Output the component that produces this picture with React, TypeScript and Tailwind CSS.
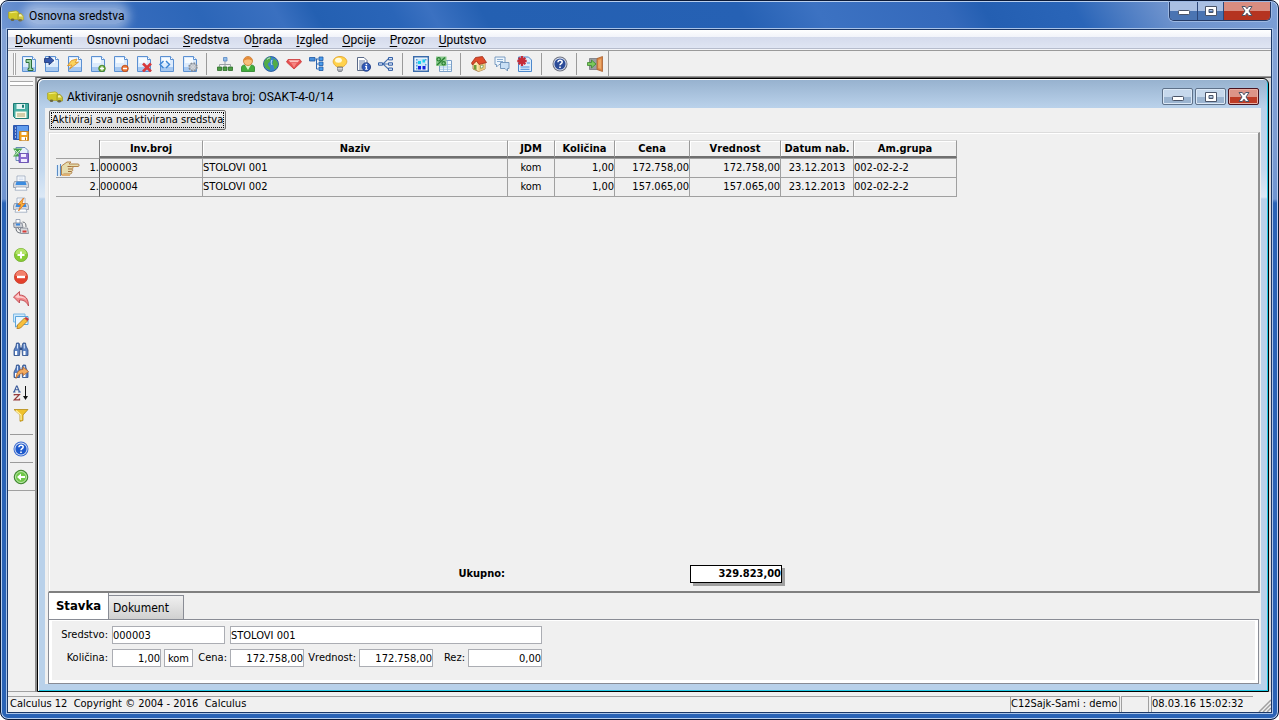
import { useState } from 'react';
import type { ReactNode } from 'react';

interface Tool {
  label: string;
  icon: ReactNode;
}

interface Asset {
  inv: string;
  name: string;
  unit: string;
  qty: string;
  price: string;
  value: string;
  date: string;
  group: string;
}

const ASSETS: Asset[] = [
  { inv: '000003', name: 'STOLOVI 001', unit: 'kom', qty: '1,00', price: '172.758,00', value: '172.758,00', date: '23.12.2013', group: '002-02-2-2' },
  { inv: '000004', name: 'STOLOVI 002', unit: 'kom', qty: '1,00', price: '157.065,00', value: '157.065,00', date: '23.12.2013', group: '002-02-2-2' },
];

// [before, underlined letter, after]
const MENU: [string, string, string][] = [
  ['', 'D', 'okumenti'],
  ['Osnovni podaci', '', ''],
  ['', 'S', 'redstva'],
  ['O', 'b', 'rada'],
  ['', 'I', 'zgled'],
  ['', 'O', 'pcije'],
  ['', 'P', 'rozor'],
  ['', 'U', 'putstvo'],
];

function Svg({ children }: { children: ReactNode }) {
  return (
    <svg viewBox="0 0 16 16" className="block h-4 w-4 shrink-0" fill="none" aria-hidden="true">
      {children}
    </svg>
  );
}

function Truck() {
  return (
    <svg viewBox="0 0 16 16" className="block h-4 w-4 shrink-0" aria-hidden="true">
      <path d="M0.500 4 8 2.800l2.500 1.200v7.500H2.500l-2-1.500z" fill="#d0c828" stroke="#a39d24" strokeWidth=".6" />
      <path d="M1 4.200 8 3.400l1.800.9-7 .9z" fill="#f2ee80" />
      <path d="M10 5.800 13 5.300l2.600 3v3.700H10z" fill="#c9c22a" stroke="#8c8722" strokeWidth=".6" />
      <path d="M11 6.600 12.800 6.300l1.700 2.200H11z" fill="#f4f2b0" />
      <ellipse cx="4.500" cy="11.800" rx="1.800" ry="1.300" fill="#6b6640" />
      <ellipse cx="12.300" cy="12.300" rx="1.800" ry="1.300" fill="#6b6640" />
    </svg>
  );
}

function Page({ children }: { children?: ReactNode }) {
  return (
    <Svg>
      <path d="M1.500.5h10l3 3v12h-13z" fill="#dcebfc" stroke="#5b90d2" />
      <path d="M3 2h8v5H3z" fill="#f6fbff" />
      <path d="M11.500.5v3h3" fill="#fff" stroke="#5b90d2" />
      <path d="M2 11h12v4H2z" fill="#a6c8f0" />
      {children}
    </Svg>
  );
}

function Binoculars({ children }: { children?: ReactNode }) {
  return (
    <Svg>
      <path d="M3.500 2h2.500l1 3v3l-.5 6.500H1V9l2-4zM10 2h2.500l.5 3 2 4v5.500H9.500L9 8V5z" fill="#5a80c0" stroke="#2c4c88" strokeWidth=".8" />
      <path d="M2 10h2.200v4H2zM10.300 10h2.200v4h-2.200z" fill="#fff" />
      <path d="M4 3h1v4.500H4zM10.800 3h1v4.500h-1z" fill="#d5e4fb" />
      <path d="M6.800 6.500h2.400v2.500H6.800z" fill="#2c4c88" />
      {children}
    </Svg>
  );
}

function Printer() {
  return (
    <>
      <path d="M4 6.500V1h8v5.500" fill="#fff" stroke="#98a6bc" strokeWidth=".8" />
      <path d="M5.500 3h5M5.500 4.700h5" stroke="#b7c9e4" strokeWidth=".7" />
      <path d="M1.500 6.500h13l1 2.500v3.500H.5V9z" fill="#d5d8df" stroke="#8c929e" strokeWidth=".8" />
      <path d="M3.500 6.500h9L13.500 10h-11z" fill="#3c8ce0" />
      <path d="M3 12h10l1 3.200H2z" fill="#fff" stroke="#98a6bc" strokeWidth=".8" />
    </>
  );
}

function Question({ fill, ring }: { fill: string; ring: string }) {
  return (
    <Svg>
      <circle cx="8" cy="8" r="7.500" fill={ring} />
      <circle cx="8" cy="8" r="6.500" fill="#dfe6f4" />
      <circle cx="8" cy="8" r="5.600" fill={fill} />
      <path d="M5.900 6.300c0-2.900 4.300-2.700 4.300-.2C10.200 7.700 8 7.600 8 9.300" stroke="#fff" strokeWidth="1.500" />
      <path d="M7.200 10.400h1.600V12H7.200z" fill="#fff" />
    </Svg>
  );
}

const DOC_TOOLS: Tool[] = [
  {
    label: 'Prvi dokument',
    icon: (
      <Page>
        <path d="M5 3.500h5.500v9h1.500v2H7v-2h1V6.500H5z" fill="#9fd6a8" stroke="#2c6e3c" />
      </Page>
    ),
  },
  {
    label: 'Otvori dokument',
    icon: (
      <Page>
        <path d="M.5 2.500H5V.2l5 4.300-5 4.300V6.500H.5z" fill="#3357ac" stroke="#1c3274" strokeWidth=".8" />
      </Page>
    ),
  },
  {
    label: 'Brzi unos',
    icon: (
      <Page>
        <path d="M4.500 4.500 10 3 8.300 6.500l3.200-.4-9 7L5 9 .5 9.700z" fill="#fbd45c" stroke="#dc9428" strokeWidth=".9" />
      </Page>
    ),
  },
  {
    label: 'Novi dokument',
    icon: (
      <Page>
        <circle cx="12" cy="12.500" r="3.300" fill="#6fae44" stroke="#3c7a20" strokeWidth=".8" />
        <path d="M12 10.500v4M10 12.500h4" stroke="#fff" strokeWidth="1.300" />
      </Page>
    ),
  },
  {
    label: 'Zatvori dokument',
    icon: (
      <Page>
        <circle cx="12" cy="12.500" r="3.300" fill="#ec7434" stroke="#b84814" strokeWidth=".8" />
        <path d="M10 12.500h4" stroke="#fff" strokeWidth="1.500" />
      </Page>
    ),
  },
  {
    label: 'Obriši dokument',
    icon: (
      <Page>
        <path d="m7 7.500 8 8M15 7.500l-8 8" stroke="#d83a3c" strokeWidth="2.600" />
      </Page>
    ),
  },
  {
    label: 'Razmena',
    icon: (
      <Page>
        <path d="M4.500 5 1 8.500 4.500 12M7 5l3.500 3.500L7 12" fill="#d5eaff" stroke="#3a83d4" strokeWidth="1.400" />
      </Page>
    ),
  },
  {
    label: 'Podešavanje dokumenta',
    icon: (
      <Page>
        <circle cx="11" cy="11" r="3.800" fill="#c8ccd2" stroke="#858b94" strokeWidth="1.800" strokeDasharray="1.700 1.300" />
        <circle cx="11" cy="11" r="3.200" fill="#d4d8de" stroke="#858b94" strokeWidth=".6" />
        <circle cx="11" cy="11" r="1.200" fill="#fff" stroke="#858b94" strokeWidth=".5" />
      </Page>
    ),
  },
];

const DATA_TOOLS: Tool[] = [
  {
    label: 'Organizacija',
    icon: (
      <Svg>
        <path d="M8 5v6M2.500 10.500V8.500h11v2" stroke="#9aa0a6" />
        <path d="M6.500 1.500h3.500v3.500H6.500z" fill="#92bce8" stroke="#5888c4" strokeWidth=".8" />
        <path d="M.5 11h4v3.500h-4zM6 11h4v3.500H6zM11.500 11h4v3.500h-4z" fill="#4c9c44" stroke="#2c6c28" strokeWidth=".8" />
      </Svg>
    ),
  },
  {
    label: 'Partneri',
    icon: (
      <Svg>
        <path d="M1.500 15.500V12c0-3 2.500-3 4-3h5c1.500 0 4 0 4 3v3.500z" fill="#42ae3c" stroke="#28822a" strokeWidth=".8" />
        <path d="m5 9 3 5 3-5z" fill="#dcf6cc" />
        <circle cx="8" cy="5" r="4.500" fill="#f8bf7c" stroke="#c4762c" strokeWidth=".8" />
        <path d="M3.600 5C3 -.5 13-.5 12.400 5 10.500 3 6 3 3.600 5z" fill="#e48a38" />
      </Svg>
    ),
  },
  {
    label: 'Lokacije',
    icon: (
      <Svg>
        <circle cx="8" cy="8" r="7.500" fill="#3a84cc" stroke="#1a4e90" strokeWidth=".8" />
        <path d="M1 6.500C2 3 4 1 8 1c1 2-1 2-1 4S4 7 5 9s3 2 2 5C3 13 1 11 1 6.500zM10 2.500c3 1 5 3 5 6-1 3-2 4-3.500 5-1-2 0-3-1.500-4.500S11 5 10 2.500z" fill="#52ac48" />
        <path d="M4 3.500c1-1 2-1.500 3-1.500M9 4c-1 1.500-1 3 0 5" stroke="#cdeaf8" />
      </Svg>
    ),
  },
  {
    label: 'Amortizacione grupe',
    icon: (
      <Svg>
        <path d="M2 3.500h12L15.500 6 8 13 .5 6z" fill="#e65050" stroke="#cc3838" strokeWidth=".8" />
        <path d="m2.500 4.200 1.800 2h7.400l1.800-2z" fill="#fcc4c0" />
        <path d="m5.200 7 2.800 4.500L10.800 7z" fill="#f68480" />
      </Svg>
    ),
  },
  {
    label: 'Struktura',
    icon: (
      <Svg>
        <path d="M6.500 3h3M7.500 3v10h2M7.500 8h2" stroke="#2c66b0" />
        <path d="M.5 1.500h5.500v3.500H.5z" fill="#4a90dc" stroke="#1c58a4" strokeWidth=".8" />
        <path d="M10 1h4v3.500h-4zM10 6h4v3.500h-4zM10 11h4v3.500h-4z" fill="#4a9cec" stroke="#1c58a4" strokeWidth=".8" />
      </Svg>
    ),
  },
  {
    label: 'Savet',
    icon: (
      <Svg>
        <path d="M5.500 11C1.500 9 .8 6 1.300 4.500 3-.9 13-.9 14.700 4.500c.5 1.500-.2 4.500-4.200 6.500z" fill="#ffd24c" stroke="#e2a020" strokeWidth=".8" />
        <ellipse cx="6.500" cy="4.300" rx="3.400" ry="2.500" fill="#fffbe0" />
        <path d="M5.500 11h5v3l-1 1.500h-3l-1-1.500z" fill="#a8acb4" stroke="#70747c" strokeWidth=".8" />
        <path d="M5.500 12.700h5" stroke="#f2f2f2" strokeWidth=".8" />
      </Svg>
    ),
  },
  {
    label: 'Informacije',
    icon: (
      <Svg>
        <path d="M2.500 1.500h6.500l3 3v10h-9.500z" fill="#fff" stroke="#5a6a88" />
        <path d="M4 5h6M4 7h6M4 9h4M4 11h3M4 13h3" stroke="#56709c" strokeWidth=".9" />
        <circle cx="11.300" cy="11" r="4.300" fill="#2e58b8" stroke="#1c3880" strokeWidth=".8" />
        <path d="M10.600 7.800h1.600v1.500h-1.600zM10.100 10h2v3h.7v.8h-2.700V13h.6v-2h-.6z" fill="#fff" />
      </Svg>
    ),
  },
  {
    label: 'Grananje',
    icon: (
      <Svg>
        <path d="M5 8 10.500 2.700M5 8h6M5 8l5.500 5.200" stroke="#4470b0" strokeWidth="1.100" />
        <path d="M.5 6.800h4v2.400h-4zM10.500 1.500h4v2.400h-4zM10.500 6.800h4v2.400h-4zM10.500 12h4v2.400h-4z" fill="#d3e3f8" stroke="#345fa4" />
      </Svg>
    ),
  },
];

const VIEW_TOOLS: Tool[] = [
  {
    label: 'Kalkulator',
    icon: (
      <Svg>
        <path d="M.7.7h14.600v14.600H.7z" fill="#fff" stroke="#3a6cac" strokeWidth="1.400" />
        <path d="M2.500 2.500h11v11h-11z" fill="#c8e4fa" />
        <path d="M3 3h1.500v1.500H3zM3 6h1.500v1.500H3zM3 9h1.500v1.500H3zM3 12h1.500v1.500H3zM12 3h1.500v1.500H12zM12 8h1.500v1.500H12z" fill="#58a0dc" />
        <path d="M5 5h3v3H5zM9.500 3.500H12v3H9.500z" fill="#18d0ec" />
        <path d="M5 10h3v3.500H5zM9.500 10h3v3.500h-3z" fill="#1420e0" />
      </Svg>
    ),
  },
  {
    label: 'Procenti',
    icon: (
      <Svg>
        <path d="M3.500 4.500h12v11h-12z" fill="#f4faff" stroke="#7ca0c8" />
        <path d="M4 8.500h11M4 11h11M4 13.300h11M7.500 5v10M11.500 5v10" stroke="#93bce0" strokeWidth=".8" />
        <path d="M0 .5h10.500v9.500H0z" fill="#8ecb90" />
        <circle cx="2.700" cy="3.300" r="1.700" stroke="#278032" strokeWidth="1.200" />
        <circle cx="7.600" cy="7.300" r="1.700" stroke="#278032" strokeWidth="1.200" />
        <path d="M9 1.500 1 9" stroke="#278032" strokeWidth="1.400" />
      </Svg>
    ),
  },
];

const HOME_TOOLS: Tool[] = [
  {
    label: 'Početna',
    icon: (
      <Svg>
        <path d="m2 8 4-4 8 2v7l-6.500 2.500L2 13z" fill="#fae7ae" stroke="#9a6830" strokeWidth=".8" />
        <path d="m7.500 9 6.500-2v6l-6.500 2.500z" fill="#ecca80" />
        <path d="m.5 7 4-5.500 7-1 4 6-7.500 2-2.500-3.500L1.500 9z" fill="#e04c2c" stroke="#a02c18" strokeWidth=".8" />
        <path d="M3 9h2.500v5.200L3 13z" fill="#6c9c38" />
        <path d="M9.500 9.500 12 9v2.500l-2.500.8z" fill="#fff" stroke="#58842c" strokeWidth=".6" />
      </Svg>
    ),
  },
  {
    label: 'Poruke',
    icon: (
      <Svg>
        <path d="M1 1h10v7.500H5L2.500 11V8.500H1z" fill="#edf5fc" stroke="#7094bc" strokeWidth=".9" />
        <path d="M3 3.500h6M3 5.500h6" stroke="#7ea4cc" strokeWidth=".9" />
        <path d="M6.500 6.500H15v6h-1.500V15L11 12.500H6.500z" fill="#c9dff5" stroke="#6a8eb8" strokeWidth=".9" />
      </Svg>
    ),
  },
  {
    label: 'Novosti',
    icon: (
      <Svg>
        <path d="M1.500 1h10L14.500 4v11.500h-13z" fill="#dcecfc" stroke="#4c88cc" />
        <path d="M10 7h3M3.500 11h9M3.500 13.300h9" stroke="#4d8dd4" />
        <path d="M5 0v10M.3 5h9.400M1.700 1.700l6.600 6.600M8.300 1.700 1.700 8.300" stroke="#c62c38" strokeWidth="2.300" />
      </Svg>
    ),
  },
];

const HELP_TOOLS: Tool[] = [{ label: 'Pomoć', icon: <Question fill="#2c4c98" ring="#6e7280" /> }];

const EXIT_TOOLS: Tool[] = [
  {
    label: 'Izlaz',
    icon: (
      <Svg>
        <path d="M2.500 2.500h9v11h-9z" fill="#9a9da2" stroke="#77797e" strokeWidth=".8" />
        <path d="m10 2.500 5.500-2v15l-5.500-2z" fill="#d98444" stroke="#a86030" strokeWidth=".8" />
        <path d="m11.200 4 3-1v10l-3-1z" fill="#eca868" />
        <path d="M.5 6.500h4V4L9 8l-4.500 4V9.500h-4z" fill="#7bc85c" stroke="#3c8830" strokeWidth=".8" />
      </Svg>
    ),
  },
];

const SAVE_TOOLS: Tool[] = [
  {
    label: 'Sačuvaj',
    icon: (
      <Svg>
        <path d="M.5.5h15v15h-13l-2-2z" fill="#48aea4" stroke="#1c7a74" />
        <path d="M3.500 1h8.500v5H3.500z" fill="#e4f5f3" />
        <path d="M9 1.800h2v3H9z" fill="#1c7a74" />
        <path d="M2.500 8.500h11V15h-11z" fill="#fbfbea" />
        <path d="M4 11h8M4 13h8" stroke="#a8a068" />
      </Svg>
    ),
  },
  {
    label: 'Sačuvaj kao',
    icon: (
      <Svg>
        <path d="M.5.500h15v14H.5z" fill="#5f9cee" stroke="#2a58b0" />
        <path d="M1 1h3v13H1z" fill="#2f5ab4" />
        <path d="M2 3h1M2 6h1M2 9h1M2 12h1" stroke="#fff" />
        <path d="M6.500 6.500h9v9h-9z" fill="#f0a020" stroke="#c47c14" strokeWidth=".8" />
        <path d="M8.500 7h5v3h-5zM8.500 12h5.500v3.200H8.500z" fill="#fff" />
        <path d="M12 12.500h1v2.500h-1z" fill="#b87010" />
      </Svg>
    ),
  },
  {
    label: 'Izvezi tabelu',
    icon: (
      <Svg>
        <path d="M3 .5h9l3 3v10H3z" fill="#e6f0fb" stroke="#6a8ab8" />
        <path d="M0 1.500h9.500L6.500 5l3 4.500H0L3 5.500z" fill="#47a44c" />
        <path d="m2 3 5 5.500M7 3 2 8.500" stroke="#d8f4d8" />
        <path d="M6 6.500h9.500v9H6z" fill="#8a6ed0" stroke="#5c42a8" strokeWidth=".8" />
        <path d="M8 7h5v3H8zM8 12h6v3H8z" fill="#f2ecff" />
      </Svg>
    ),
  },
];

const PRINT_TOOLS: Tool[] = [
  { label: 'Štampaj', icon: <Svg><Printer /></Svg> },
  {
    label: 'Brza štampa',
    icon: (
      <Svg>
        <Printer />
        <path d="M10.500 1 5 7.500h3L5.500 14 12 6.500H9z" fill="#fcb83c" stroke="#de7420" strokeWidth=".8" />
      </Svg>
    ),
  },
  {
    label: 'Izbor štampača',
    icon: (
      <Svg>
        <path d="M3 4V.5h4V4" fill="#fff" stroke="#7888a0" strokeWidth=".7" />
        <path d="M.5 4H9l1 4.500H1z" fill="#c8ccd4" stroke="#787f8c" strokeWidth=".8" />
        <path d="M3 4.500h4v2H3z" fill="#3c88dc" />
        <path d="M7.500 9h7l1 5.500h-8z" fill="#d8dade" stroke="#787f8c" strokeWidth=".8" />
        <path d="M9.500 11.500h4v2h-4z" fill="#d83c38" />
        <path d="M3 9c0 3 1 4.500 4 5M9.500 3c3 0 3.500 2 3.500 5M4.500 8.500l3 3.500" stroke="#6b7078" />
      </Svg>
    ),
  },
];

const EDIT_TOOLS: Tool[] = [
  {
    label: 'Dodaj stavku',
    icon: (
      <Svg>
        <circle cx="8" cy="8" r="6.600" fill="#88cc34" stroke="#74ac30" strokeWidth=".8" />
        <path d="M2.500 7a5.500 5.500 0 0 1 11 0z" fill="#b3e368" />
        <path d="M8 4.500v7M4.500 8h7" stroke="#fff" strokeWidth="2" />
      </Svg>
    ),
  },
  {
    label: 'Obriši stavku',
    icon: (
      <Svg>
        <circle cx="8" cy="8" r="6.600" fill="#e4402c" stroke="#c44430" strokeWidth=".8" />
        <path d="M2.500 7a5.500 5.500 0 0 1 11 0z" fill="#f2806c" />
        <path d="M4 8h8" stroke="#fff" strokeWidth="2.400" />
      </Svg>
    ),
  },
  {
    label: 'Vrati',
    icon: (
      <Svg>
        <path d="M.5 6 6.500.5V4c6 0 9 4 9 11-2-4-4-6-9-6v3z" fill="#f28a8c" stroke="#b83c44" strokeWidth=".8" />
        <path d="m2 6 4-3.500V5c3 0 6 1 7.500 4C11 7 8 6.500 5 7z" fill="#fccfcf" />
      </Svg>
    ),
  },
  {
    label: 'Izmeni stavku',
    icon: (
      <Svg>
        <path d="M.5 1H12v8H.5z" fill="#cfe9fb" stroke="#7cb8e4" />
        <path d="M2.500 3.500H15v8H6L2.500 14z" fill="#e9f6ff" stroke="#5aa4dc" />
        <path d="m4.500 12 7-7 3 3-7 7-3.500.8z" fill="#f7bf3c" stroke="#a8741c" strokeWidth=".8" />
        <path d="m11.500 5 1.500-1 3 2-1.500 2z" fill="#c8343c" />
      </Svg>
    ),
  },
];

const FIND_TOOLS: Tool[] = [
  { label: 'Traži', icon: <Binoculars /> },
  {
    label: 'Traži dalje',
    icon: (
      <Binoculars>
        <path d="M3 15.500C3.500 9 6 6.500 10 6.500V4l5.500 4.500L10 12.500V10c-3 0-5 2-7 5.500z" fill="#f3ac60" stroke="#b8682c" strokeWidth=".8" />
      </Binoculars>
    ),
  },
  {
    label: 'Sortiraj',
    icon: (
      <Svg>
        <path d="m1 7 2.500-6h.6L6.500 7M2.200 4.800h3M0 7h2.500M5.200 7h2.600" stroke="#3c5c9c" strokeWidth="1.100" />
        <path d="M1.300 10.500V9.600h5L1.300 14.800h5.200v-1.300" stroke="#963c3c" strokeWidth="1.300" />
        <path d="M12.500 1v11" stroke="#111" />
        <path d="M10 11h5l-2.500 4z" fill="#111" />
      </Svg>
    ),
  },
  {
    label: 'Filter',
    icon: (
      <Svg>
        <path d="M1 2.500h14L10 8v5.500l-3 .8V8z" fill="#efc22c" stroke="#b48a14" strokeWidth=".8" />
        <path d="m3 3.500 5 4.500v5" stroke="#fff2a8" strokeWidth="1.200" />
      </Svg>
    ),
  },
];

const SIDE_HELP: Tool = { label: 'Pomoć za prozor', icon: <Question fill="#1c58cc" ring="#3c6cd0" /> };

const SIDE_BACK: Tool = {
  label: 'Nazad',
  icon: (
    <Svg>
      <circle cx="8" cy="8" r="6.800" fill="#45a42c" stroke="#2c741c" strokeWidth=".8" />
      <circle cx="8" cy="8" r="5.500" fill="#6fc848" stroke="#dff4d4" strokeWidth=".8" />
      <path d="M12 7H8V4.500L4 8l4 3.500V9h4z" fill="#fff" />
    </Svg>
  ),
};

function TopTools({ tools }: { tools: Tool[] }) {
  return (
    <>
      {tools.map(t => (
        <button key={t.label} aria-label={t.label} className="flex h-[23px] w-[23px] items-center justify-center">
          {t.icon}
        </button>
      ))}
    </>
  );
}

function SideTools({ tools }: { tools: Tool[] }) {
  return (
    <>
      {tools.map(t => (
        <button key={t.label} aria-label={t.label} className="flex h-[22px] w-[26px] items-center justify-center">
          {t.icon}
        </button>
      ))}
    </>
  );
}

function TopSeparator() {
  return <div className="ml-[5px] mr-[6px] h-[22px] w-px bg-[#9a9a9a]" />;
}

function SideSeparator() {
  return <div className="mx-[2px] mb-[3px] mt-[2px] h-px bg-[#9a9a9a]" />;
}

function MinGlyph() {
  return (
    <svg viewBox="0 0 14 12" className="h-3 w-[14px]" aria-hidden="true">
      <rect x="1.500" y="5.500" width="11" height="4" rx=".8" fill="#fff" stroke="#4a5468" />
    </svg>
  );
}

function MaxGlyph() {
  return (
    <svg viewBox="0 0 14 12" className="h-3 w-[14px]" aria-hidden="true">
      <path d="M1.500 1.500h11v9h-11zM5 4.500v3h4v-3z" fill="#fff" fillRule="evenodd" stroke="#4a5468" />
    </svg>
  );
}

function CloseGlyph() {
  return (
    <svg viewBox="0 0 14 12" className="h-3 w-[14px]" aria-hidden="true">
      <path d="M2 1.500h3.300L7 3.800l1.700-2.300H12L9 6l3 4.500H8.700L7 8.200l-1.700 2.300H2L5 6z" fill="#fff" stroke="#4a5468" />
    </svg>
  );
}

function Hand() {
  return (
    <svg viewBox="0 0 24 16" className="block h-4 w-6" fill="none" aria-hidden="true">
      <path d="M0 5h5v11H0z" fill="#dceaf6" />
      <path d="M1.500 5v11M4.500 4v12" stroke="#5c8cc4" />
      <path d="M5.500 6 11 2h4l-2 2h9c1.500 0 1.500 2.500 0 2.500h-6.500c2 0 2 2.500 0 2.500 2 0 1.500 2.500-.5 2.500 1.500.5 1 2.500-1 2.500H8l-2.500 1z" fill="#e5dcae" stroke="#b4844c" />
      <path d="M11.500 6.500h4M12 9h3.500M12 11.500h3" stroke="#a46c3c" />
      <path d="M6 14h8v2H6z" fill="#e0b070" />
    </svg>
  );
}

interface FieldProps {
  id: string;
  label?: string;
  value: string;
  labelClass?: string;
  className: string;
}

function Field({ id, label, value, labelClass, className }: FieldProps) {
  return (
    <>
      {label && <label htmlFor={id} className={`shrink-0 text-right ${labelClass ?? ''}`}>{label}</label>}
      <input
        id={id}
        aria-label={label ? undefined : id}
        defaultValue={value}
        className={`h-[18px] border border-[#abadb3] bg-white outline-none ${className}`}
      />
    </>
  );
}

const TH = 'h-[18px] border-b-2 border-r border-t border-b-[#707070] border-r-[#9a9a9a] border-t-[#d8d8d8] p-0 text-center font-bold shadow-[inset_1px_1px_0_#fff]';

export default function App() {
  const [tab, setTab] = useState('Stavka');

  return (
    <div className="flex min-h-screen flex-col rounded-lg border border-[#0b1a38] bg-[linear-gradient(180deg,#86a5d8_0px,#7c9cd2_140px,#6f94d0_198px,#2a63b6_202px,#2a63b6_100%)] px-[6px] pb-[6px] font-['DejaVu_Sans_Condensed','DejaVu_Sans',sans-serif] text-[11px] leading-[14px] text-black shadow-[inset_0_0_0_1px_#b9cfee]">
      <header className="-mx-[5px] mt-px flex h-[27px] items-center justify-between rounded-t-md bg-[linear-gradient(60deg,#7297d2_0%,#3a6ebf_7%,#2c66b8_16%,#3a70c0_22%,#2460b2_25%,#2a65b8_31%,#3b71c1_34%,#2460b2_38%,#2661b4_58%,#3c72c2_64%,#3469bb_74%,#245fb2_77%,#2a65b8_84%,#6d92cd_91%,#7c9fd6_100%)] pl-[6px] pr-[6px]">
        <div className="flex items-center gap-[5px]">
          <Truck />
          <h1 className="rounded-full bg-white/40 font-['Roboto',sans-serif] text-xs leading-4 shadow-[0_0_10px_6px_rgba(255,255,255,0.4)]">Osnovna sredstva</h1>
        </div>
        <div className="flex self-start overflow-hidden rounded-b-[5px] border border-t-0 border-[#243a66] shadow-[0_0_0_1px_#9db8e2]">
          <button aria-label="Smanji" className="flex h-[18px] w-7 items-center justify-center border-r border-[#2b4678] bg-linear-to-b from-[#a9bfe2] from-50% to-[#4a74b2] to-50%"><MinGlyph /></button>
          <button aria-label="Uvećaj" className="flex h-[18px] w-[26px] items-center justify-center border-r border-[#2b4678] bg-linear-to-b from-[#a9bfe2] from-50% to-[#4a74b2] to-50%"><MaxGlyph /></button>
          <button aria-label="Zatvori" className="flex h-[18px] w-[46px] items-center justify-center bg-linear-to-b from-[#d98d80] from-50% to-[#b53420] to-50%"><CloseGlyph /></button>
        </div>
      </header>

      <div className="flex flex-1 flex-col border border-[#1b3766] bg-[#f0f0f0] shadow-[0_0_0_1px_#a9c3e8]">
        <nav className="flex h-[21px] items-center gap-[14px] border-b border-[#9a9a9a] bg-[linear-gradient(180deg,#ffffff_0px,#f2f4fa_7px,#d5dbec_7px,#dfe5f3_18px,#b6bccc_18px,#b6bccc_19px,#f4f5f9_19px)] pl-[7px] font-['Roboto',sans-serif] text-xs leading-4">
          {MENU.map(([before, key, after]) => (
            <button key={before + key + after}>
              {before}<span className="underline underline-offset-2">{key}</span>{after}
            </button>
          ))}
        </nav>

        <div className="flex h-[26px] items-center border-b border-[#9a9a9a] bg-[#f0f0f0] pl-[5px]">
          <div className="mr-px h-[22px] w-[3px] border-x border-[#a8a8a8] bg-white" />
          <TopTools tools={DOC_TOOLS} />
          <TopSeparator />
          <TopTools tools={DATA_TOOLS} />
          <TopSeparator />
          <TopTools tools={VIEW_TOOLS} />
          <TopSeparator />
          <TopTools tools={HOME_TOOLS} />
          <TopSeparator />
          <TopTools tools={HELP_TOOLS} />
          <TopSeparator />
          <TopTools tools={EXIT_TOOLS} />
          <div className="ml-[2px] h-full w-px bg-[#9a9a9a]" />
        </div>

        <div className="flex flex-1">
          <aside className="w-[27px] shrink-0 border-b border-[#a0a0a0]">
            <div className="border-b border-[#a0a0a0] pb-[2px]">
              <div className="mx-[2px] mb-[14px] mt-1 h-[5px] border-y border-[#a8a8a8] bg-white" />
              <SideTools tools={SAVE_TOOLS} />
              <SideSeparator />
              <SideTools tools={PRINT_TOOLS} />
              <div className="h-[6px]" />
              <SideTools tools={EDIT_TOOLS} />
              <div className="h-[6px]" />
              <SideTools tools={FIND_TOOLS} />
              <div className="h-[6px]" />
              <SideSeparator />
              <SideTools tools={[SIDE_HELP]} />
              <SideSeparator />
              <SideTools tools={[SIDE_BACK]} />
            </div>
          </aside>

          <main className="flex flex-1 border-l-2 border-t border-l-[#8e8e8e] border-t-[#606060] bg-[#d8d8d8] pr-[2px]">
            <section className="flex flex-1 flex-col rounded-t-md border border-black bg-[linear-gradient(180deg,#96b1ce_0px,#b9d1ea_28px,#c3d8ee_90px,#dbe8f6_118px,#b9d1ea_120px,#b9d1ea_100%)] px-[7px] pb-[7px] shadow-[inset_1px_1px_0_#fff,inset_-1px_-1px_0_#20c8e4]">
              <div className="flex h-[29px] items-center justify-between pl-[2px] pr-[2px] pt-[6px]">
                <div className="flex items-center gap-1">
                  <Truck />
                  <h2 className="font-['Roboto',sans-serif] text-xs leading-4">Aktiviranje osnovnih sredstava broj: OSAKT-4-0/14</h2>
                </div>
                <div className="flex gap-[2px]">
                  <button aria-label="Smanji prozor" className="flex h-[17px] w-[31px] items-center justify-center rounded-xs border border-[#5e7189] bg-linear-to-b from-[#c6d8ec] from-50% to-[#9bb4d0] to-50% shadow-[inset_0_0_0_1px_#dbe8f6]"><MinGlyph /></button>
                  <button aria-label="Uvećaj prozor" className="flex h-[17px] w-[31px] items-center justify-center rounded-xs border border-[#5e7189] bg-linear-to-b from-[#c6d8ec] from-50% to-[#9bb4d0] to-50% shadow-[inset_0_0_0_1px_#dbe8f6]"><MaxGlyph /></button>
                  <button aria-label="Zatvori prozor" className="flex h-[17px] w-[31px] items-center justify-center rounded-xs border border-[#4a1420] bg-linear-to-b from-[#dd9488] from-50% to-[#bd3b26] to-50% shadow-[inset_0_0_0_1px_#eab0a4]"><CloseGlyph /></button>
                </div>
              </div>

              <div className="flex flex-1 flex-col bg-[#f0f0f0] pl-[3px] pr-px pt-[2px]">
                <button className="ml-px h-5 self-start rounded-xs border border-[#707070] bg-linear-to-b from-[#f2f2f2] to-[#dcdcdc] p-px">
                  <span className="flex h-4 items-center border border-dotted border-black">Aktiviraj sva neaktivirana sredstva</span>
                </button>

                <div className="mt-[2px] flex flex-1 flex-col justify-between border-b-2 border-l border-r-2 border-t border-b-[#808080] border-l-[#e0e0e0] border-r-[#909090] border-t-[#dcdcdc] pb-2 pl-[7px] pt-[7px] shadow-[inset_1px_1px_0_#fff]">
                  <table className="w-[901px] table-fixed border-separate border-spacing-0">
                    <colgroup>
                      <col className="w-[44px]" />
                      <col className="w-[103px]" />
                      <col className="w-[305px]" />
                      <col className="w-[47px]" />
                      <col className="w-[60px]" />
                      <col className="w-[75px]" />
                      <col className="w-[91px]" />
                      <col className="w-[73px]" />
                      <col className="w-[103px]" />
                    </colgroup>
                    <thead>
                      <tr>
                        <td className="border-r border-[#808080] p-0" />
                        <th className={TH}>Inv.broj</th>
                        <th className={TH}>Naziv</th>
                        <th className={TH}>JDM</th>
                        <th className={TH}>Količina</th>
                        <th className={TH}>Cena</th>
                        <th className={TH}>Vrednost</th>
                        <th className={TH}>Datum nab.</th>
                        <th className={TH}>Am.grupa</th>
                      </tr>
                    </thead>
                    <tbody>
                      {ASSETS.map((a, i) => {
                        const td = `border-b border-r border-[#a0a0a0] p-0 ${i === 0 ? 'h-5 border-t' : 'h-[19px]'}`;
                        return (
                          <tr key={a.inv}>
                            <td className={`${td} border-r-[#606060]`}>
                              <div className="flex items-center justify-between">
                                {i === 0 ? <Hand /> : <span />}
                                <span>{i + 1}.</span>
                              </div>
                            </td>
                            <td className={td}>{a.inv}</td>
                            <td className={td}>{a.name}</td>
                            <td className={`${td} text-center`}>{a.unit}</td>
                            <td className={`${td} text-right`}>{a.qty}</td>
                            <td className={`${td} text-right`}>{a.price}</td>
                            <td className={`${td} text-right`}>{a.value}</td>
                            <td className={`${td} text-center`}>{a.date}</td>
                            <td className={td}>{a.group}</td>
                          </tr>
                        );
                      })}
                    </tbody>
                  </table>

                  <div className="flex items-center font-bold">
                    <span className="w-[449px] text-right">Ukupno:</span>
                    <output className="ml-[185px] h-[18px] w-[92px] border border-black bg-white text-right leading-4 shadow-[3px_3px_0_#a0a0a0]">329.823,00</output>
                  </div>
                </div>

                <div className="flex h-[26px] items-end" role="tablist">
                  {['Stavka', 'Dokument'].map(name => (
                    <button
                      key={name}
                      role="tab"
                      aria-selected={tab === name}
                      onClick={() => setTab(name)}
                      className={tab === name
                        ? 'h-[26px] w-[61px] border-l border-r border-[#898c95] bg-white text-[13px] font-bold'
                        : 'h-6 w-[75px] border-r border-t border-[#898c95] bg-linear-to-b from-[#f0f0f0] to-[#d0d0d0] pl-1 text-left text-xs'}
                    >
                      {name}
                    </button>
                  ))}
                </div>

                <div className="mr-px border border-[#898c95] bg-white p-[3px] pt-px">
                  <form className="flex flex-col gap-[5px] bg-[#f0f0f0] pb-[13px] pt-[5px]">
                    <div className="flex items-center">
                      <Field id="sredstvo" label="Sredstvo:" value="000003" labelClass="mr-1 w-14" className="w-[113px]" />
                      <Field id="naziv" value="STOLOVI 001" className="ml-[5px] w-[312px]" />
                    </div>
                    <div className="flex items-center">
                      <Field id="kolicina" label="Količina:" value="1,00" labelClass="mr-1 w-14" className="w-[49px] text-right" />
                      <Field id="jedinica" value="kom" className="ml-[3px] w-[29px] text-center" />
                      <Field id="cena" label="Cena:" value="172.758,00" labelClass="w-[37px] pr-[3px]" className="w-[74px] text-right" />
                      <Field id="vrednost" label="Vrednost:" value="172.758,00" labelClass="w-[55px] pr-[3px]" className="w-[74px] text-right" />
                      <Field id="rez" label="Rez:" value="0,00" labelClass="w-[35px] pr-[3px]" className="w-[74px] text-right" />
                    </div>
                  </form>
                </div>
              </div>
            </section>
          </main>
        </div>

        <footer className="flex h-5 items-end pt-1">
          <div className="h-4 flex-1 border-t border-[#a0a0a0] pl-[2px] whitespace-pre">{'Calculus 12  Copyright © 2004 - 2016  Calculus'}</div>
          <div className="h-4 w-[110px] border-l border-r border-t border-[#a0a0a0]">C12Sajk-Sami : demo</div>
          <div className="ml-px h-4 w-[28px] border-l border-r border-t border-[#a0a0a0]" />
          <div className="ml-[2px] h-4 w-[102px] border-l border-t border-[#a0a0a0]">08.03.16 15:02:32</div>
          <svg viewBox="0 0 18 16" className="h-4 w-[18px]" aria-hidden="true">
            <path d="M6 16 18 4M10 16l8-8M14 16l4-4" stroke="#a0a0a0" strokeWidth="1.500" />
          </svg>
        </footer>
      </div>
    </div>
  );
}
